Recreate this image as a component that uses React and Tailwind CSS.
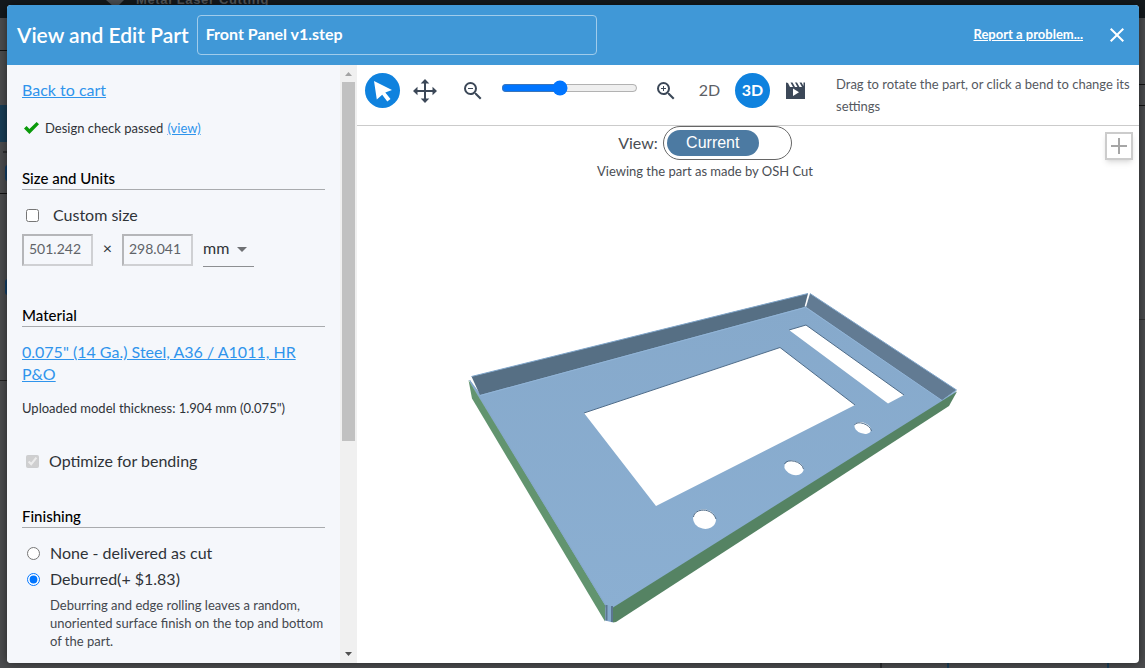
import React, { useState } from 'react';
import { MdZoomIn, MdZoomOut, MdClose } from 'react-icons/md';

function PageBehind() {
  return (
    <div aria-hidden="true" className="absolute inset-0 flex flex-col bg-[#4b4c4e] overflow-hidden">
      <div className="h-[18px] shrink-0 bg-[#14191d] flex items-start pl-[106px] overflow-hidden">
        <svg className="w-[18px] h-[6px] shrink-0" viewBox="0 0 18 6">
          <path d="M0 0h18l-6 6H7z" fill="#4d5054" />
        </svg>
        <span className="ml-3 -mt-2 text-[13px] leading-4 font-bold tracking-wider text-[#55585b] font-['Liberation_Sans']">
          Metal Laser Cutting
        </span>
      </div>
      <div className="flex-1 flex justify-between">
        <div className="w-2 flex flex-col">
          <div className="h-[33px] border-b border-[#111111]" />
          <div className="h-[54px]" />
          <div className="h-[37px] bg-[#183d56]" />
          <div className="h-[52px] border-b border-[#111111] flex flex-col items-end justify-between pt-[9px] pb-3">
            <div className="w-[5px] h-[2px] bg-[#2d2e30]" />
            <div className="w-[3px] h-4 rounded-l-full bg-[#123f68]" />
          </div>
          <div className="h-[187px] border-b border-[#222222] flex flex-col items-end pt-[85px]">
            <div className="w-[3px] h-4 rounded-l-full bg-[#123f68]" />
          </div>
        </div>
        <div className="w-2 flex flex-col">
          <div className="h-[67px] border-b border-[#111111]" />
          <div className="h-[21px] border-b border-[#111111]" />
          <div className="h-[214px] border-b border-[#333333]" />
        </div>
      </div>
      <div className="h-[6px] shrink-0 flex justify-end pr-9">
        <div className="w-[67px] border-l-2 border-[#2d2e30]" />
        <div className="w-[162px] border-x-2 border-[#1c3f57]" />
      </div>
    </div>
  );
}

function Header() {
  return (
    <header className="h-[60px] shrink-0 flex items-center bg-[#4098d7] text-white pl-[10px] pr-[10px]">
      <h1 className="text-[21px] font-semibold whitespace-nowrap">View and Edit Part</h1>
      <input
        aria-label="Part name"
        defaultValue="Front Panel v1.step"
        className="ml-2 w-[400px] h-10 rounded-sm border border-[#a0cceb] bg-transparent px-2 pb-[3px] text-base font-bold text-white outline-none"
      />
      <a href="#report" className="ml-auto text-[13px] font-bold underline">Report a problem...</a>
      <button aria-label="Close" className="ml-[22px]">
        <MdClose className="w-6 h-6" />
      </button>
    </header>
  );
}

function SectionTitle({ children }) {
  return (
    <h2 className="h-[22px] border-b border-[#a9abae] text-[15px] leading-5 font-medium text-black">
      {children}
    </h2>
  );
}

function SizeInput({ label, value }) {
  return (
    <input
      aria-label={label}
      defaultValue={value}
      className="w-[71px] h-8 border-2 border-t-[#b5b6b9] border-l-[#b5b6b9] border-b-[#cfd0d3] border-r-[#cfd0d3] px-[5px] pb-[3px] text-sm text-[#606368] outline-none"
    />
  );
}

function Sidebar() {
  const [custom, setCustom] = useState(false);
  const [finish, setFinish] = useState('deburred');

  return (
    <aside className="w-[350px] shrink-0 flex bg-[#f5f7fb]">
      <div className="flex-1 min-w-0 overflow-hidden px-[15px] pt-[14px] text-base leading-[22px] text-[#2f3338]">
        <a href="#cart" className="text-[#2f94ec] underline">Back to cart</a>

        <div className="mt-4 flex items-center text-[13px]">
          <svg className="w-[15px] h-3 ml-[2px] mr-[6px]" viewBox="0 0 15 12">
            <path d="M0 6.6 2.6 4 5.4 6.9 12.6 0 15 2.3 5.4 12z" fill="#0a9a0a" />
          </svg>
          Design check passed
          <a href="#check" className="ml-1 text-[#2f94ec] underline">(view)</a>
        </div>

        <div className="mt-[29px]">
          <SectionTitle>Size and Units</SectionTitle>
        </div>
        <label className="mt-[14px] flex items-center">
          <input
            type="checkbox"
            checked={custom}
            onChange={() => setCustom(!custom)}
            className="w-[13px] h-[13px] ml-1 mr-[14px]"
          />
          Custom size
        </label>
        <div className="mt-[7px] flex items-center h-[34px]">
          <SizeInput label="Width" value="501.242" />
          <span className="w-[29px] -mt-1 text-center text-base">×</span>
          <SizeInput label="Height" value="298.041" />
          <span className="ml-[10px] relative flex items-center w-[51px] h-[34px] border-b border-[#8d8f92]">
            <select aria-label="Units" defaultValue="mm" className="w-full h-full appearance-none bg-transparent pb-1 outline-none">
              <option>mm</option>
              <option>in</option>
            </select>
            <svg className="absolute right-[7px] w-[10px] h-[5px] pointer-events-none" viewBox="0 0 10 5">
              <path d="M0 0h10L5 5z" fill="#6f7174" />
            </svg>
          </span>
        </div>

        <div className="mt-[38px]">
          <SectionTitle>Material</SectionTitle>
        </div>
        <a href="#material" className="mt-[14px] block text-[#2f94ec] underline">
          0.075&quot; (14 Ga.) Steel, A36 / A1011, HR P&amp;O
        </a>
        <p className="mt-3 text-[13px]">Uploaded model thickness: 1.904 mm (0.075&quot;)</p>

        <label className="mt-[31px] flex items-center">
          <input type="checkbox" checked disabled readOnly className="w-[13px] h-[13px] ml-1 mr-[10px]" />
          Optimize for bending
        </label>

        <div className="mt-[34px]">
          <SectionTitle>Finishing</SectionTitle>
        </div>
        <div className="mt-3 leading-[26px]">
          <label className="flex items-center">
            <input
              type="radio"
              name="finish"
              checked={finish === 'none'}
              onChange={() => setFinish('none')}
              className="w-[13px] h-[13px] ml-[5px] mr-[10px]"
            />
            None - delivered as cut
          </label>
          <label className="flex items-center">
            <input
              type="radio"
              name="finish"
              checked={finish === 'deburred'}
              onChange={() => setFinish('deburred')}
              className="w-[13px] h-[13px] ml-[5px] mr-[10px]"
            />
            Deburred(+ $1.83)
          </label>
        </div>
        <p className="mt-1 pl-7 text-[13px] leading-[18px] text-[#44484e]">
          Deburring and edge rolling leaves a random, unoriented surface finish on the top and bottom of the part.
        </p>
      </div>

      {/* scrollbar */}
      <div aria-hidden="true" className="w-[17px] flex flex-col items-center bg-[#f0f0f0]">
        <svg className="w-[17px] h-[17px]" viewBox="0 0 17 17">
          <path d="M5 11h7L8.500 7z" fill="#a3a3a3" />
        </svg>
        <div className="w-[13px] h-3/5 bg-[#c1c1c1]" />
        <svg className="mt-auto w-[17px] h-[17px]" viewBox="0 0 17 17">
          <path d="M5 6h7l-3.500 4z" fill="#505050" />
        </svg>
      </div>
    </aside>
  );
}

function Toolbar() {
  const [zoom, setZoom] = useState(42);

  return (
    <div className="h-[61px] shrink-0 flex items-start pt-2 pl-2 border-b border-[#cbcbcb] text-[#3c4858]">
      <button aria-label="Select" className="w-[35px] h-[35px] rounded-full bg-[#0f82de] flex items-center justify-center">
        <svg className="w-[35px] h-[35px]" viewBox="0 0 35 35">
          <path d="M9 8 27 17 20.300 19.500 25.500 26 22.300 28.500 17.200 21.800 11.800 26.500z" fill="#fff" />
        </svg>
      </button>
      <button aria-label="Pan" className="ml-[13px] h-[35px]">
        <svg className="w-6 h-6" viewBox="0 0 24 24" fill="currentColor">
          <path d="M12 0 16.300 4.500H13V11H19.500V7.700L24 12l-4.500 4.300V13H13v6.500h3.300L12 24l-4.300-4.500H11V13H4.500v3.300L0 12l4.500-4.300V11H11V4.500H7.700z" />
        </svg>
      </button>
      <button aria-label="Zoom out" className="ml-6 h-[35px]">
        <MdZoomOut className="w-6 h-6" />
      </button>
      <input
        type="range"
        aria-label="Zoom"
        value={zoom}
        onChange={(e) => setZoom(Number(e.target.value))}
        className="ml-4 mt-[7px] w-[137px] h-4"
      />
      <button aria-label="Zoom in" className="ml-4 h-[35px]">
        <MdZoomIn className="w-6 h-6" />
      </button>
      <button className="ml-[14px] w-[35px] h-[35px] pb-[2px] text-base text-[#5c6066]">2D</button>
      <button className="ml-2 w-[35px] h-[35px] rounded-full bg-[#0f82de] pb-[2px] text-base font-bold text-white">3D</button>
      <button aria-label="Animate" className="ml-4 h-[35px]">
        <svg className="w-[19px] h-[18px]" viewBox="0 0 19 18">
          <path
            d="M0 .500 2 1 4 5H7L4.500 .500H6.500L9 5h2.500L9 .500h2L13.500 5H16L13.500 .500H15.500L17.500 4V.500H19V17H0z"
            fill="currentColor"
          />
          <path d="M7 6.500v7.500l6-3.700z" fill="#fff" />
        </svg>
      </button>
      <p className="flex-1 ml-[31px] text-[13px] leading-[22px] text-[#55595f]">
        Drag to rotate the part, or click a bend to change its settings
      </p>
    </div>
  );
}

function PartModel() {
  return (
    <svg className="w-[490px] h-[332px]" viewBox="468 292 490 332" role="img" aria-label="3D part">
      <defs>
        <linearGradient id="face" x1="0" y1="0" x2="0" y2="1">
          <stop offset="0" stopColor="#86a9cb" />
          <stop offset="1" stopColor="#8bafd2" />
        </linearGradient>
      </defs>
      {/* base plate */}
      <path
        fillRule="evenodd"
        fill="url(#face)"
        d="M470 380 479 392 805 306 944 399 956 391 955 395 613 610 604 607 470 383z
          M584 413 780 347.500 855 405 656 506z
          M789 330 806 325 904 395 888 403.500z"
      />
      {/* flanges */}
      <path d="M471.500 376.500 808 293.500 804.500 307 480 395z" fill="#566f84" />
      <path d="M471.500 376.500 808 293.500" stroke="#7fa5ca" fill="none" />
      <path d="M480 395.500 805 307.500" stroke="#92b5d8" fill="none" />
      <path d="M810 293.500 956.500 390 942 400.500 806 307z" fill="#627b93" />
      <path d="M810 293.500 956.500 390 942 400.500" stroke="#82a8cd" fill="none" />
      <path d="M806 307.500 942 400.500" stroke="#92b5d8" fill="none" />
      <path d="M468.500 380 605.500 606 605 621.500 472 398.500z" fill="#62946f" />
      <path d="M469.500 380 605.500 605" stroke="#86a9cb" fill="none" />
      <path d="M957 391.500 613 607.500V622.500L616 622 949 406z" fill="#558363" />
      <path d="M605.500 604.500 613 607V622.500L605 620.500z" fill="#86aace" />
      <path d="M606.500 605v15.500M612 606v16" stroke="#5c7691" strokeWidth="2" fill="none" />
      {/* cutout edges */}
      <path d="M584 413 780 347.500 855 405" stroke="#4f6c89" fill="none" />
      <path d="M789 330 806 325 904 395" stroke="#4f6c89" fill="none" />
      <g fill="#fff">
        <ellipse cx="704.500" cy="519.200" rx="11.500" ry="9.600" transform="rotate(12 704.500 519.200)" />
        <ellipse cx="794" cy="467.800" rx="9.900" ry="7" transform="rotate(18 794 467.800)" />
        <ellipse cx="862.700" cy="428" rx="8.600" ry="5.400" transform="rotate(20 862.700 428)" />
      </g>
      <g fill="none" stroke="#4f6c89">
        <path d="M693.500 517C694.500 508 712 507 716 519" />
        <path d="M784.500 464C787 458 802 461 803.500 469" />
        <path d="M854.500 425C857 420 870 424 871.500 431" />
      </g>
    </svg>
  );
}

function Viewer() {
  return (
    <section className="relative flex-1 min-h-0 flex flex-col items-center text-[#4a4e54]">
      <div className="flex flex-col items-center mr-[86px]">
        <div className="flex items-center gap-[5px]">
          <span className="text-base">View:</span>
          <button className="w-[129px] h-[34px] rounded-full border border-[#666666] p-[3px]">
            <span className="block w-[92px] h-[26px] rounded-full bg-[#4c7aa2] text-base leading-[26px] text-white font-['Liberation_Sans']">
              Current
            </span>
          </button>
        </div>
        <p className="mt-px text-[13px] leading-5">Viewing the part as made by OSH Cut</p>
      </div>
      <div className="mt-[111px] mr-[71px]">
        <PartModel />
      </div>
      <button
        aria-label="Expand"
        className="absolute top-[6px] right-[6px] w-7 h-7 border-2 border-[#cccccc] bg-white shadow-md flex items-center justify-center"
      >
        <svg className="w-4 h-4" viewBox="0 0 16 16">
          <path d="M8 0v16M0 8h16" stroke="#a6a6a6" strokeWidth="2" />
        </svg>
      </button>
    </section>
  );
}

export default function App() {
  return (
    <div className="relative h-screen flex p-[5px] pl-[7px] pr-[6px] font-['Lato',sans-serif]">
      <PageBehind />
      <main className="relative flex-1 min-w-0 flex flex-col rounded overflow-hidden bg-white shadow-[0_0_10px_rgba(0,0,0,0.5)]">
        <Header />
        <div className="flex-1 min-h-0 flex">
          <Sidebar />
          <div className="flex-1 min-w-0 flex flex-col">
            <Toolbar />
            <Viewer />
          </div>
        </div>
      </main>
    </div>
  );
}
